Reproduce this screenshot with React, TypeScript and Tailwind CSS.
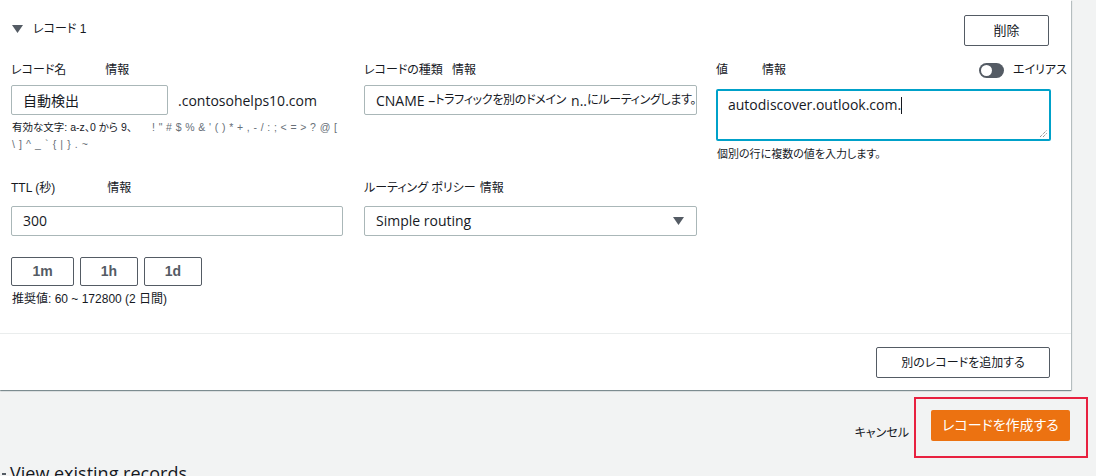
import React from "react";

const jp = "font-['Liberation_Sans','Noto_Sans_CJK_JP',sans-serif]";
const ui = "font-['Open_Sans','Noto_Sans_CJK_JP',sans-serif]";

function Label({ text, infoGap }: { text: string; infoGap: string }) {
    return (
        <div className={`flex items-center h-4 text-[12px] leading-4 text-[#16191f] ${jp}`}>
            <span>{text}</span>
            <span className={infoGap}>情報</span>
        </div>
    );
}

function Caret({ className = "" }: { className?: string }) {
    return (
        <svg width="11" height="8" viewBox="0 0 11 8" className={className}>
            <polygon points="0,0 11,0 5.5,8" fill="#545b64" />
        </svg>
    );
}

export default function App() {
    return (
        <div className={`w-[1096px] h-[476px] overflow-hidden bg-[#f2f3f3] [font-feature-settings:'palt'] ${jp}`}>
            {/* record panel */}
            <div className="w-[1071px] h-[390px] bg-white flex flex-col shadow-[0_1px_1px_0_rgba(0,28,36,0.35),1px_1px_1px_0_rgba(0,28,36,0.2)]">
                <div className="px-[11px] pr-[20px] flex-1">
                    {/* header */}
                    <div className="flex justify-between items-start pt-[15px]">
                        <div className="flex items-center mt-[5px] pl-[1px]">
                            <Caret />
                            <span className="ml-[10px] text-[12px] text-[#16191f]">レコード 1</span>
                        </div>
                        <button className="w-[85px] h-[31px] mr-[2px] border border-[#545b64] rounded-[2px] text-[13px] text-[#16191f] bg-white">
                            削除
                        </button>
                    </div>

                    {/* row 1 */}
                    <div className="grid grid-cols-[332px_333px_334px] gap-x-[20px] mt-[16px]">
                        <div>
                            <Label text="レコード名" infoGap="ml-[39px]" />
                            <div className="flex items-center mt-[7px]">
                                <div className={`w-[157px] h-[30px] border border-[#aab7b8] rounded-[2px] flex items-center pl-[11px] text-[14px] text-[#16191f] ${ui}`}>
                                    自動検出
                                </div>
                                <span className={`ml-[10px] text-[14px] text-[#16191f] ${ui}`}>.contosohelps10.com</span>
                            </div>
                            <div className="mt-[4px] text-[10.5px] leading-[17px] pl-[1px]">
                                <div className="flex whitespace-nowrap">
                                    <span className="text-[#16191f]">有効な文字: a-z、0 から 9、</span>
                                    <span className="ml-[20px] text-[#687078] tracking-[0.4px]">! " # $ % &amp; ' ( ) * + , - / : ; &lt; = &gt; ? @ [</span>
                                </div>
                                <div className="text-[#687078] tracking-[0.6px]">\ ] ^ _ ` {"{"} | {"}"} . ~</div>
                            </div>
                        </div>

                        <div className="ml-[1px]">
                            <Label text="レコードの種類" infoGap="ml-[9px]" />
                            <div className={`mt-[7px] w-[333px] h-[30px] border border-[#aab7b8] rounded-[2px] flex items-center pl-[11px] text-[14px] text-[#16191f] whitespace-nowrap overflow-hidden ${ui}`}>
                                <span>CNAME –</span>
                                <span className="text-[12px] tracking-[-0.3px]">トラフィックを別のドメイン</span>
                                <span className="ml-[5px]">n..</span>
                                <span className="text-[12px] tracking-[-0.3px]">にルーティングします。</span>
                            </div>
                        </div>

                        <div>
                            <div className="flex items-center justify-between h-4 -mr-[17px]">
                                <Label text="値" infoGap="ml-[34px]" />
                                <div className="flex items-center">
                                    <div className="w-[25px] h-[15px] rounded-full bg-[#545b64] flex items-center pl-[2px]">
                                        <div className="w-[11px] h-[11px] rounded-full bg-white" />
                                    </div>
                                    <span className="ml-[9px] text-[12px] text-[#16191f]">エイリアス</span>
                                </div>
                            </div>
                            <div className={`relative mt-[11px] w-[335px] h-[52px] border-2 border-[#00a1c9] rounded-[2px] pl-[10px] pt-[3px] text-[14px] text-[#16191f] ${ui}`}>
                                <span>autodiscover.outlook.com.</span>
                                <span className="inline-block w-[1px] h-[17px] bg-[#16191f] align-middle -mt-[2px]" />
                                <svg width="9" height="9" viewBox="0 0 9 9" className="absolute right-[1px] bottom-[1px]">
                                    <line x1="1" y1="8" x2="8" y2="1" stroke="#6b6b6b" strokeWidth="1" strokeDasharray="1 1" />
                                    <line x1="4" y1="8" x2="8" y2="4" stroke="#6b6b6b" strokeWidth="1" strokeDasharray="1 1" />
                                </svg>
                            </div>
                            <div className="mt-[5px] text-[11px] text-[#16191f] pl-[1px]">個別の行に複数の値を入力します。</div>
                        </div>
                    </div>

                    {/* row 2 */}
                    <div className="grid grid-cols-[332px_333px] gap-x-[21px] mt-[17px]">
                        <div>
                            <Label text="TTL (秒)" infoGap="ml-[52px]" />
                            <div className={`mt-[10px] h-[30px] border border-[#aab7b8] rounded-[2px] flex items-center pl-[11px] text-[14px] text-[#16191f] ${ui}`}>
                                300
                            </div>
                            <div className="flex gap-[6px] mt-[21px]">
                                {[["1m", "w-[63px]"], ["1h", "w-[58px]"], ["1d", "w-[58px]"]].map(([t, w]) => (
                                    <button key={t} className={`${w} h-[29px] border border-[#545b64] rounded-[2px] bg-white text-[14px] font-bold text-[#545b64] font-['Liberation_Sans',sans-serif]`}>
                                        {t}
                                    </button>
                                ))}
                            </div>
                            <div className="mt-[4px] text-[12px] text-[#16191f] pl-[1px]">推奨値: 60 ~ 172800 (2 日間)</div>
                        </div>
                        <div>
                            <Label text="ルーティング ポリシー" infoGap="ml-[4px]" />
                            <div className={`mt-[10px] h-[30px] border border-[#aab7b8] rounded-[2px] flex items-center justify-between pl-[11px] pr-[12px] text-[14px] text-[#16191f] ${ui}`}>
                                <span>Simple routing</span>
                                <Caret />
                            </div>
                        </div>
                    </div>
                </div>

                {/* footer */}
                <div className="border-t border-[#eaeded] h-[57px] flex justify-end items-start pt-[13px] pr-[21px]">
                    <button className="w-[174px] h-[31px] border border-[#545b64] rounded-[2px] bg-white text-[12px] text-[#16191f]">
                        別のレコードを追加する
                    </button>
                </div>
            </div>

            {/* actions */}
            <div className="flex justify-end items-start mt-[7px] pr-[8px]">
                <span className="mt-[27px] mr-[5px] text-[12px] text-[#16191f]">キャンセル</span>
                <div className="border-2 border-[#e8203f] pl-[15px] pr-[16px] pt-[11px] pb-[15px]">
                    <button className="w-[139px] h-[31px] rounded-[2px] bg-[#ec7211] text-white text-[14px]">
                        レコードを作成する
                    </button>
                </div>
            </div>

            <div className={`flex items-center mt-[2px] pl-[2px] text-[18px] text-[#16191f] ${ui}`}>
                <span className="w-[4px] h-[2px] bg-[#545b64] mr-[4px]" />
                <span>View existing records</span>
            </div>
        </div>
    );
}
